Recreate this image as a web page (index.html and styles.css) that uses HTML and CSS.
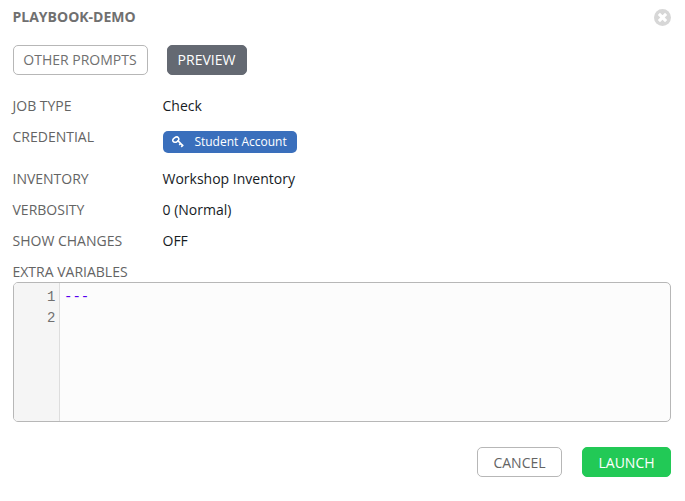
FILE: index.html
```html
<!DOCTYPE html>
<html lang="en">
<head>
<meta charset="utf-8">
<title>Launch job</title>
<link rel="stylesheet" href="styles.css">
</head>
<body>
<main class="modal">
  <header class="head">
    <h1 class="title">PLAYBOOK-DEMO</h1>
    <svg class="close" viewBox="0 0 16 16" aria-hidden="true"><circle cx="8" cy="8" r="8"/><path d="M4.6 4.6l6.8 6.8M11.4 4.6l-6.8 6.8"/></svg>
  </header>
  <nav class="tabs">
    <button class="btn">OTHER PROMPTS</button>
    <button class="btn active">PREVIEW</button>
  </nav>
  <dl class="details">
    <div class="row"><dt>JOB TYPE</dt><dd>Check</dd></div>
    <div class="row credential"><dt>CREDENTIAL</dt><dd><span class="tag"><svg class="key" viewBox="0 0 12 12" aria-hidden="true"><ellipse cx="3.8" cy="3.7" rx="3.2" ry="2.3" transform="rotate(-35 3.8 3.7)"/><path d="M5.6 4.4l5.2 5.2M7.2 8.9l1.7-1.6M9.2 10.9l2.1-2"/></svg>Student Account</span></dd></div>
    <div class="row"><dt>INVENTORY</dt><dd>Workshop Inventory</dd></div>
    <div class="row"><dt>VERBOSITY</dt><dd>0 (Normal)</dd></div>
    <div class="row"><dt>SHOW CHANGES</dt><dd>OFF</dd></div>
    <div class="row extra"><dt>EXTRA VARIABLES</dt></div>
  </dl>
  <section class="editor">
    <div class="gutter"><div>1</div><div>2</div></div>
    <div class="code">---</div>
  </section>
  <footer class="foot">
    <button class="btn cancel">CANCEL</button>
    <button class="btn launch">LAUNCH</button>
  </footer>
</main>
</body>
</html>
```
FILE: styles.css
```css
* { box-sizing: border-box; }
body { margin: 0; background: #fff; font-family: "Open Sans", sans-serif; font-size: 14px; line-height: 20px; color: #161b1f; }
.modal { height: 501px; padding: 7px 14px 0 12.5px; }
.head { display: flex; justify-content: space-between; height: 38px; }
.title { margin: 0; font-size: 14px; line-height: 20px; font-weight: 700; color: #707070; }
.close { width: 17px; height: 17px; margin-top: 2px; }
.close circle { fill: #d7d7d7; }
.close path { stroke: #fff; stroke-width: 2.9; fill: none; }
.tabs { display: flex; gap: 19px; }
.btn { height: 30px; padding: 0; border: 1px solid #b7b7b7; border-radius: 5px; background: #fff; color: #707070; font: 14px/20px "Open Sans", sans-serif; width: 135px; }
.active { width: 80px; background: #646972; border-color: #646972; color: #fff; }
.details { margin: 21px 0 0; }
.row { display: flex; height: 31px; }
.row dt { width: 150px; color: #646464; }
.row dd { margin: 0; }
.credential { height: 42px; }
.tag { display: flex; align-items: center; width: 134px; height: 22px; margin-top: 4px; padding-left: 9.5px; border-radius: 5px; background: #3a6fbc; color: #fff; font-size: 12px; }
.key { width: 12px; height: 12px; margin-right: 10.4px; }
.key ellipse, .key path { fill: none; stroke: #fff; stroke-width: 1.5; }
.extra { height: 20px; }
.editor { display: flex; height: 140px; margin-left: 0.5px; border: 1px solid #b7b7b7; border-radius: 5px; background: #fcfcfc; overflow: hidden; font: 14px/21px "Liberation Mono", monospace; }
.gutter { width: 46px; padding: 4px 3.6px 0 0; border-right: 1px solid #ddd; background: #f5f5f5; color: #707070; text-align: right; }
.code { padding: 4px 4px; color: #50e; }
.foot { display: flex; justify-content: flex-end; gap: 20px; margin-top: 25px; }
.foot .btn { padding-top: 2px; }
.cancel { width: 85px; color: #646464; }
.foot .launch { width: 89px; background: #22c956; border-color: #22c956; color: #fff; }
```
